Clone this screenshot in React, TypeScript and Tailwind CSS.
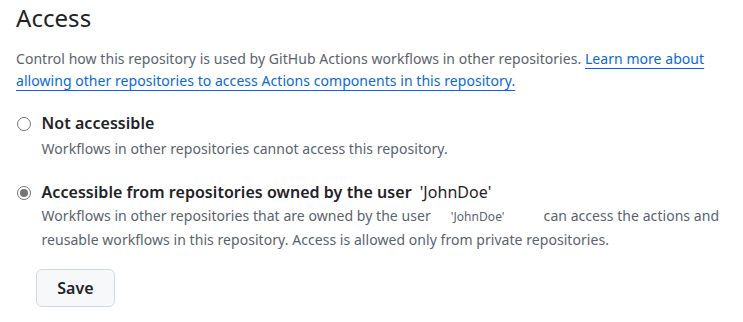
import { useState } from "react";

const Radio = ({ checked }: { checked: boolean }) => (
  <span className="mt-[6px] flex h-[14px] w-[14px] shrink-0 items-center justify-center rounded-full border border-[#767676] bg-white">
    {checked && <span className="h-[8px] w-[8px] rounded-full bg-[#767676]" />}
  </span>
);

export default function App() {
  const [access, setAccess] = useState("user");

  return (
    <div className="min-h-screen bg-white px-4 font-['Noto_Sans',sans-serif] tracking-[0.05px] text-[#1f2328]">
      <h2 className="text-[24px] leading-[36px] font-normal">Access</h2>
      <p className="mt-3 text-[14px] leading-[22px] text-[#59636e]">
        Control how this repository is used by GitHub Actions workflows in other repositories.{" "}
        <a href="#" className="text-[#0969da] underline underline-offset-[4px]">
          Learn more about allowing other repositories to access Actions components in this repository.
        </a>
      </p>

      <div className="mt-[19px] flex gap-[11px] pl-[0.5px]" onClick={() => setAccess("none")}>
        <Radio checked={access === "none"} />
        <div>
          <div className="text-[16px] leading-[24px] font-semibold">Not accessible</div>
          <div className="mt-[3px] text-[14px] leading-[22px] text-[#59636e]">
            Workflows in other repositories cannot access this repository.
          </div>
        </div>
      </div>

      <div className="mt-[20px] flex gap-[11px] pl-[0.5px]" onClick={() => setAccess("user")}>
        <Radio checked={access === "user"} />
        <div>
          <div className="text-[16px] leading-[24px] font-semibold">
            Accessible from repositories owned by the user
            <span className="ml-[8px] font-normal">'JohnDoe'</span>
          </div>
          <div className="text-[14px] leading-[23px] text-[#59636e]">
            Workflows in other repositories that are owned by the user
            <span className="mr-[39px] ml-[20px] text-[12px] text-[#59636e]">'JohnDoe'</span>
            can access the actions and reusable workflows in this repository. Access is allowed only from private
            repositories.
          </div>
        </div>
      </div>

      <button className="mt-[18px] ml-5 flex h-[38px] w-[79px] items-center justify-center rounded-md border border-[#d1d9e0] bg-[#f6f8fa] text-[16px] font-semibold text-[#1f2328]">
        Save
      </button>
    </div>
  );
}
